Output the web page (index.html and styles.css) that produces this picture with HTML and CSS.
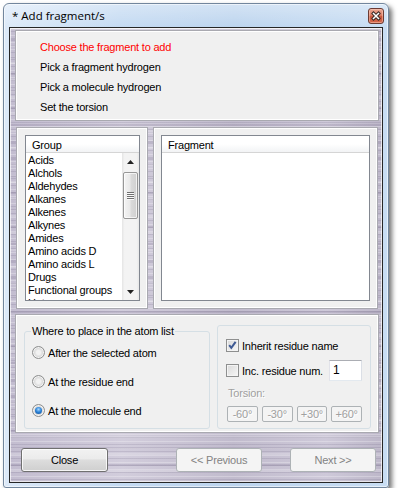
FILE: index.html
```html
<!DOCTYPE html>
<html>
<head>
	<meta charset="utf-8">
	<title>Add fragment/s</title>
	<link rel="stylesheet" href="styles.css">
</head>
<body>
	<div class="window">
		<div class="titlebar">
			<span class="title">* Add fragment/s</span>
			<span class="close_box">
				<svg width="10" height="10" viewBox="0 0 10 10">
					<path d="M2.5 2.5 L7.5 7.5 M7.5 2.5 L2.5 7.5" stroke="#3b2a27" stroke-width="3.4" stroke-linecap="square"/>
					<path d="M2.5 2.5 L7.5 7.5 M7.5 2.5 L2.5 7.5" stroke="#fff" stroke-width="1.5" stroke-linecap="square"/>
				</svg>
			</span>
		</div>
		<div class="client">
			<div class="panel steps">
				<div class="step current">Choose the fragment to add</div>
				<div class="step">Pick a fragment hydrogen</div>
				<div class="step">Pick a molecule hydrogen</div>
				<div class="step">Set the torsion</div>
			</div>

			<div class="middle">
				<div class="panel list_panel group_panel">
					<div class="listview">
						<div class="lv_header">Group</div>
						<div class="lv_body">
							<ul class="lv_items">
								<li>Acids</li>
								<li>Alchols</li>
								<li>Aldehydes</li>
								<li>Alkanes</li>
								<li>Alkenes</li>
								<li>Alkynes</li>
								<li>Amides</li>
								<li>Amino acids D</li>
								<li>Amino acids L</li>
								<li>Drugs</li>
								<li>Functional groups</li>
								<li>Heterocycles</li>
							</ul>
							<div class="scrollbar">
								<div class="sb_btn">
									<svg width="7" height="4" viewBox="0 0 7 4"><path d="M0 4 L3.5 0 L7 4 Z" fill="#222"/></svg>
								</div>
								<div class="sb_thumb">
									<svg width="7" height="8" viewBox="0 0 7 8">
										<path d="M0 0.5h7M0 2.5h7M0 4.5h7M0 6.5h7" stroke="#707070"/>
										<path d="M0 1.5h7M0 3.5h7M0 5.5h7M0 7.5h7" stroke="#fafafa"/>
									</svg>
								</div>
								<div class="sb_track"></div>
								<div class="sb_btn">
									<svg width="7" height="4" viewBox="0 0 7 4"><path d="M0 0 L3.5 4 L7 0 Z" fill="#222"/></svg>
								</div>
							</div>
						</div>
					</div>
				</div>
				<div class="panel list_panel fragment_panel">
					<div class="listview">
						<div class="lv_header">Fragment</div>
						<div class="lv_body"></div>
					</div>
				</div>
			</div>

			<div class="panel options">
				<fieldset class="place">
					<legend>Where to place in the atom list</legend>
					<div class="radio_row"><span class="radio"></span>After the selected atom</div>
					<div class="radio_row"><span class="radio"></span>At the residue end</div>
					<div class="radio_row"><span class="radio on"></span>At the molecule end</div>
				</fieldset>
				<div class="residue">
					<div class="check_row">
						<span class="checkbox">
							<svg width="11" height="11" viewBox="0 0 11 11"><path d="M2.2 5.2 L4.3 7.8 L8.6 1.8" fill="none" stroke="#3f5a94" stroke-width="2"/></svg>
						</span>
						Inherit residue name
					</div>
					<div class="check_row inc">
						<span class="checkbox"></span>
						Inc. residue num.
						<span class="edit">1</span>
					</div>
					<div class="torsion_label">Torsion:</div>
					<div class="torsion_buttons">
						<span class="tbtn">-60°</span>
						<span class="tbtn">-30°</span>
						<span class="tbtn">+30°</span>
						<span class="tbtn">+60°</span>
					</div>
				</div>
			</div>

			<div class="buttons">
				<button class="btn btn_close">Close</button>
				<button class="btn btn_off btn_prev">&lt;&lt; Previous</button>
				<button class="btn btn_off btn_next">Next &gt;&gt;</button>
			</div>
		</div>
	</div>
</body>
</html>
```

FILE: styles.css
```css
body {
	margin: 0;
	background: #fff;
	font-family: "Liberation Sans", Arial, sans-serif;
	font-size: 11px;
	letter-spacing: -0.2px;
	color: #000;
}

/* window frame */
.window {
	box-sizing: border-box;
	width: 386px;
	height: 485px;
	margin: 3px 0 0 3px;
	padding: 0 5px 4px;
	border: 1px solid #72869d;
	border-radius: 6px 6px 3px 3px;
	background:
		linear-gradient(180deg, rgba(255,255,255,.35), rgba(255,255,255,0) 24px),
		linear-gradient(90deg, #dce9f8 0%, #c4daf2 30%, #bcd4ee 60%, #c8ddf3 100%);
	box-shadow: 3px 3px 5px rgba(0,0,0,.55), inset 0 0 0 1px rgba(255,255,255,.55);
	display: flex;
	flex-direction: column;
}
.titlebar {
	height: 23px;
	display: flex;
	align-items: center;
	padding-left: 3px;
}
.title {
	font-family: "Open Sans", "Noto Sans", sans-serif;
	font-size: 11.5px;
	letter-spacing: 0;
}
.close_box {
	margin-left: auto;
	margin-right: -1px;
	align-self: flex-start;
	margin-top: 4px;
	width: 16px;
	height: 16px;
	box-sizing: border-box;
	border: 1px solid #6b3b33;
	border-radius: 3px;
	background: linear-gradient(#eba894, #dc7e66 45%, #c8543a 55%, #d5694c);
	box-shadow: inset 0 0 0 1px rgba(255,215,200,.45);
	display: flex;
	align-items: center;
	justify-content: center;
}

/* client area with brushed metal */
.client {
	flex: 1;
	border: 1px solid #262626;
	box-shadow: inset 0 0 0 1px rgba(255,255,255,.7);
	padding: 2px 3px 0 5px;
	display: flex;
	flex-direction: column;
	background:
		repeating-linear-gradient(180deg, rgba(255,255,255,.26) 0 1px, transparent 1px 3px, rgba(70,60,95,.13) 3px 4px, transparent 4px 7px),
		repeating-linear-gradient(180deg, rgba(255,255,255,.18) 0 2px, transparent 2px 11px, rgba(60,45,85,.12) 11px 13px, transparent 13px 17px),
		linear-gradient(90deg, #c3bdd0, #d2cddc 30%, #c1bbcd 60%, #cec9d9 85%, #bdb7c9);
}

.panel {
	box-sizing: border-box;
	background: #f0f0f0;
	border: 1px solid #a9a9b0;
	box-shadow: inset 0 0 0 1px #fff;
}

.steps {
	height: 91px;
	padding: 6px 0 0 24px;
}
.step {
	line-height: 20px;
}
.step.current {
	color: #f00;
}

.middle {
	display: flex;
	gap: 5px;
	height: 182px;
	margin: 6px 1px 0;
}
.list_panel {
	display: flex;
	padding: 7px;
}
.group_panel {
	flex: none;
	width: 132px;
	padding-left: 8px;
}
.fragment_panel {
	flex: 1;
}
.listview {
	flex: 1;
	min-width: 0;
	display: flex;
	flex-direction: column;
	border: 1px solid #828790;
	background: #fff;
}
.lv_header {
	flex: none;
	height: 16px;
	line-height: 19px;
	padding-left: 6px;
	border-bottom: 1px solid #d5d5d5;
	background: linear-gradient(#fff, #fff 50%, #f2f3f5);
}
.lv_body {
	flex: 1;
	min-height: 0;
	display: flex;
	overflow: hidden;
}
.lv_items {
	flex: 1;
	list-style: none;
	margin: 0;
	padding: 1px 0 0 2px;
}
.lv_items li {
	height: 13px;
	line-height: 13px;
	white-space: nowrap;
}

.scrollbar {
	flex: none;
	width: 17px;
	display: flex;
	flex-direction: column;
	background: linear-gradient(90deg, #e4e4e4, #f3f3f3 15%, #f3f3f3 85%, #e8e8e8);
}
.sb_btn {
	flex: none;
	height: 17px;
	display: flex;
	align-items: center;
	justify-content: center;
}
.sb_thumb {
	flex: none;
	height: 47px;
	margin: 2px 1px 0;
	box-sizing: border-box;
	border: 1px solid #979797;
	border-radius: 2px;
	background: linear-gradient(90deg, #f4f4f4, #e9e9e9 45%, #dadada 55%, #d0d0d0);
	box-shadow: inset 0 0 0 1px rgba(255,255,255,.7);
	display: flex;
	align-items: center;
	justify-content: center;
}
.sb_track {
	flex: 1;
}

/* options panel */
.options {
	height: 119px;
	margin-top: 5px;
	display: flex;
	gap: 7px;
	padding: 10px 7px 3px 8px;
}
.place {
	flex: none;
	width: 186px;
	box-sizing: border-box;
	margin: 0;
	padding: 0 6px;
	border: 1px solid #d5dfe5;
	border-radius: 3px;
}
.place legend {
	padding: 0 1px;
	line-height: 13px;
}
.radio_row {
	height: 29px;
	display: flex;
	align-items: center;
	gap: 3px;
	padding-left: 1px;
}
.radio {
	flex: none;
	width: 13px;
	height: 13px;
	box-sizing: border-box;
	border: 1px solid #8e8f8f;
	border-radius: 50%;
	background: radial-gradient(circle at 50% 50%, #f2f2f2 0 2px, #dcdcdc 4px, #c9c9c9 6px);
	box-shadow: inset 0 0 0 1px #f4f4f4;
	display: flex;
	align-items: center;
	justify-content: center;
}
.radio.on::after {
	content: "";
	width: 7px;
	height: 7px;
	border-radius: 50%;
	background: radial-gradient(circle at 50% 35%, #a6d6ff 0, #2f86d9 45%, #0b4a98 100%);
}

.residue {
	flex: 1;
	border: 1px solid #d5dfe5;
	border-radius: 3px;
	padding: 13px 8px 0;
}
.check_row {
	height: 13px;
	display: flex;
	align-items: center;
	gap: 3px;
}
.check_row.inc {
	height: 21px;
	margin-top: 8px;
}
.checkbox {
	flex: none;
	width: 13px;
	height: 13px;
	box-sizing: border-box;
	border: 1px solid #8e8f8f;
	background: linear-gradient(135deg, #d9d9d9, #f7f7f7);
	box-shadow: inset 0 0 0 1px #f4f4f4;
	display: flex;
	align-items: center;
	justify-content: center;
}
.edit {
	margin-left: auto;
	width: 33px;
	height: 21px;
	box-sizing: border-box;
	border: 1px solid #abadb3;
	border-color: #abadb3 #dbdfe6 #e3e9ef #e2e3ea;
	background: #fff;
	padding-left: 3px;
	line-height: 19px;
	font-size: 12px;
}
.torsion_label {
	margin: 6px 0 0 2px;
	line-height: 13px;
	color: #a0a0a0;
	text-shadow: 1px 1px 0 #fff;
}
.torsion_buttons {
	display: flex;
	gap: 4px;
	margin: 6px 0 0 1px;
}
.tbtn {
	flex: 1;
	height: 16px;
	box-sizing: border-box;
	border: 1px solid #adb2b5;
	border-radius: 2px;
	background: #f4f4f4;
	color: #a0a0a0;
	text-shadow: 1px 1px 0 #fff;
	text-align: center;
	line-height: 14px;
}

/* bottom buttons */
.buttons {
	display: flex;
	margin: 15px 0 0 6px;
}
.btn {
	height: 24px;
	box-sizing: border-box;
	padding: 0;
	border-radius: 3px;
	font: inherit;
	letter-spacing: inherit;
	text-align: center;
}
.btn_close {
	width: 87px;
	color: #000;
	border: 1px solid #707070;
	background: linear-gradient(#f2f2f2, #ebebeb 45%, #dddddd 50%, #cfcfcf);
	box-shadow: inset 0 0 0 1px rgba(255,255,255,.8);
}
.btn_off {
	width: 86px;
	color: #838383;
	border: 1px solid #adb2b5;
	background: #f4f4f4;
}
.btn_prev {
	margin-left: 68px;
}
.btn_next {
	margin-left: 28px;
}
```
